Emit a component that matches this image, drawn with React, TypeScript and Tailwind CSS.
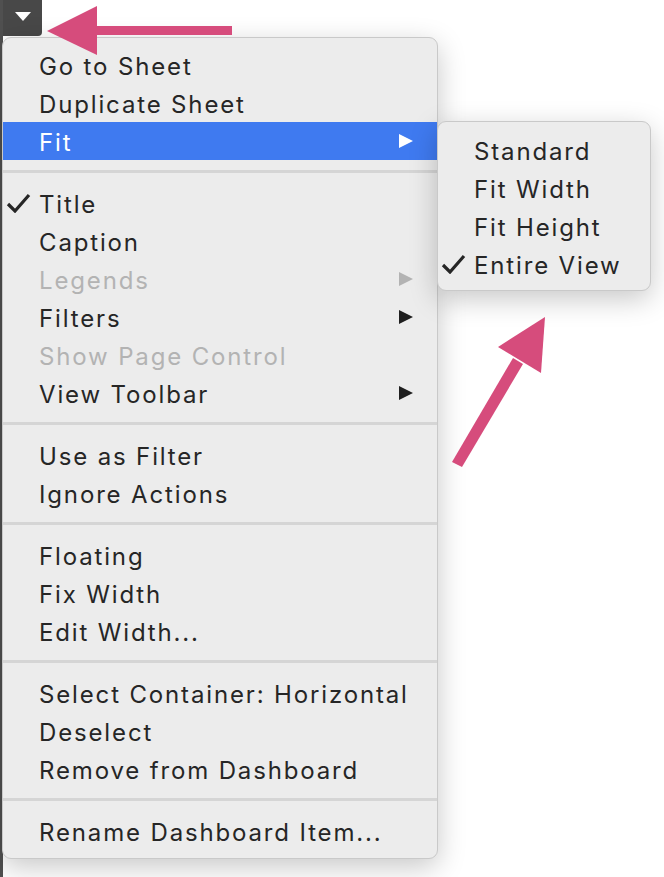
import { Fragment } from 'react'

type Item = { label: string; checked?: boolean; disabled?: boolean; submenu?: boolean; active?: boolean }

const sections: Item[][] = [
  [
    { label: 'Go to Sheet' },
    { label: 'Duplicate Sheet' },
    { label: 'Fit', submenu: true, active: true },
  ],
  [
    { label: 'Title', checked: true },
    { label: 'Caption' },
    { label: 'Legends', disabled: true, submenu: true },
    { label: 'Filters', submenu: true },
    { label: 'Show Page Control', disabled: true },
    { label: 'View Toolbar', submenu: true },
  ],
  [{ label: 'Use as Filter' }, { label: 'Ignore Actions' }],
  [{ label: 'Floating' }, { label: 'Fix Width' }, { label: 'Edit Width...' }],
  [{ label: 'Select Container: Horizontal' }, { label: 'Deselect' }, { label: 'Remove from Dashboard' }],
  [{ label: 'Rename Dashboard Item...' }],
]

const fitOptions: Item[] = [
  { label: 'Standard' },
  { label: 'Fit Width' },
  { label: 'Fit Height' },
  { label: 'Entire View', checked: true },
]

function Row({ item }: { item: Item }) {
  const color = item.active ? 'bg-[#3f7af0] text-white' : item.disabled ? 'text-[#b3b3b3]' : 'text-[#262626]'
  const arrow = item.active ? 'border-l-white' : item.disabled ? 'border-l-[#b3b3b3]' : 'border-l-[#1f1f1f]'
  return (
    <div className={`h-[38px] flex items-center pl-[3px] pr-[24px] ${color}`}>
      <span className="w-[33px] shrink-0 flex items-center">
        {item.checked && (
          <svg className="w-[25px] h-[20px]" viewBox="0 0 25 20" fill="none">
            <path d="M2 11 L9 18 L23 2" stroke="#262626" strokeWidth="3.2" />
          </svg>
        )}
      </span>
      <span className="flex-1 pt-[4px]">{item.label}</span>
      {item.submenu && (
        <span className={`w-0 h-0 border-y-[7px] border-y-transparent border-l-[14px] ${arrow}`} />
      )}
    </div>
  )
}

export default function App() {
  return (
    <div
      className="relative w-[664px] h-[877px] bg-white overflow-hidden flex text-[24px] tracking-[1.85px]"
      style={{ fontFamily: 'Inter, "Noto Sans", "Liberation Sans", sans-serif' }}
    >
      <div className="w-[3px] h-full bg-[#505050]" />
      <div className="flex-1">
        <div className="w-[39px] h-[36px] bg-[#484848] rounded-br-[4px] flex items-center justify-center pb-[3px]">
          <span className="w-0 h-0 border-x-[8px] border-x-transparent border-t-[9px] border-t-white" />
        </div>
      </div>

      {/* main context menu */}
      <div className="absolute left-[2px] top-[37px] w-[436px] bg-[#ececec] rounded-[9px] border border-[#c9c9c9] py-[8px] shadow-[0_8px_28px_rgba(0,0,0,0.22)]">
        {sections.map((sec, i) => (
          <Fragment key={i}>
            {i > 0 && <div className="mt-[10px] mb-[11px] h-[3px] bg-[#d5d5d5]" />}
            {sec.map((it) => (
              <Row key={it.label} item={it} />
            ))}
          </Fragment>
        ))}
      </div>

      {/* Fit submenu */}
      <div className="absolute left-[437px] top-[121px] w-[214px] bg-[#ececec] rounded-[9px] border border-[#c9c9c9] pt-[9px] pb-[7px] shadow-[0_8px_28px_rgba(0,0,0,0.22)]">
        {fitOptions.map((it) => (
          <Row key={it.label} item={it} />
        ))}
      </div>

      {/* annotation arrows */}
      <svg className="absolute left-0 top-0 w-[664px] h-[877px] pointer-events-none" viewBox="0 0 664 877">
        <rect x="95" y="26" width="137" height="9" fill="#d64c7c" />
        <polygon points="47,31 97,6 97,55" fill="#d64c7c" />
        <polygon points="452,462 462,467 523,364 513,358" fill="#d64c7c" />
        <polygon points="545,317 498,347 541,373" fill="#d64c7c" />
      </svg>
    </div>
  )
}
